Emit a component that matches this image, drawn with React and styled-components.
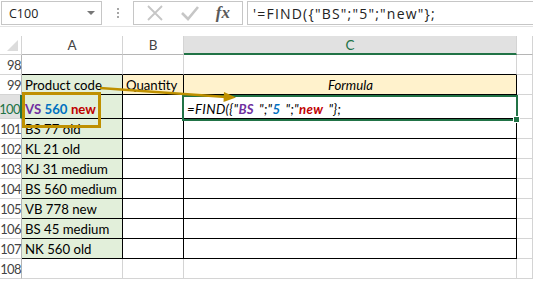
import styled, { createGlobalStyle } from 'styled-components'

const GlobalStyle = createGlobalStyle`
  html, body { margin: 0; padding: 0; background: #fff; }
  body { width: 533px; height: 281px; overflow: hidden; }
`

const GRID = '#d4d4d4'
const GREEN = '#217346'
const GOLD = '#bf9000'

const Page = styled.div`
  width: 533px;
  height: 281px;
  position: relative;
  font-family: Lato, "Liberation Sans", sans-serif;
`

const FormulaBar = styled.div`
  display: flex;
  align-items: center;
  height: 27px;
  padding: 0 0 0 1px;
  border-bottom: 1px solid #e3e3e3;
  box-sizing: border-box;
  font-family: "Open Sans", "Noto Sans", sans-serif;
`

const NameBox = styled.div`
  width: 101px;
  height: 24px;
  box-sizing: border-box;
  border: 1px solid #c6c6c6;
  display: flex;
  align-items: center;
  justify-content: space-between;
  padding: 0 6px 0 7px;
  font-size: 12.5px;
  color: #222;
`

const Caret = styled.span`
  width: 0;
  height: 0;
  border-left: 4px solid transparent;
  border-right: 4px solid transparent;
  border-top: 4px solid #777;
`

const Grip = styled.div`
  width: 31px;
  display: flex;
  flex-direction: column;
  align-items: center;
  gap: 2px;
  span {
    width: 2px;
    height: 2px;
    background: #a6a6a6;
  }
`

const ButtonsBox = styled.div`
  width: 110px;
  height: 24px;
  box-sizing: border-box;
  border: 1px solid #c6c6c6;
  display: flex;
  align-items: center;
  justify-content: space-around;
  padding: 0 4px;
  margin-right: 4px;
`

const Fx = styled.span`
  font-family: "Liberation Serif", serif;
  font-style: italic;
  font-weight: bold;
  font-size: 17px;
  color: #5a5a5a;
`

const FormulaInput = styled.div`
  flex: 1;
  height: 24px;
  box-sizing: border-box;
  border: 1px solid #c6c6c6;
  border-right: none;
  display: flex;
  align-items: center;
  padding-left: 5px;
  font-size: 14px;
  letter-spacing: 1.2px;
  color: #222;
  white-space: nowrap;
`

const Sheet = styled.div`
  margin-top: 9px;
  display: grid;
  grid-template-columns: 22px 101px 61px 333px 1fr;
  grid-template-rows: 19px 20px 20px 24px repeat(8, 20px);
`

const Corner = styled.div`
  border-right: 1px solid ${GRID};
  border-bottom: 1px solid ${GRID};
  position: relative;
  &::after {
    content: '';
    position: absolute;
    right: 3px;
    bottom: 3px;
    border-left: 11px solid transparent;
    border-bottom: 11px solid #dcdcdc;
  }
`

const ColHead = styled.div`
  border-right: 1px solid ${GRID};
  border-bottom: ${p => (p.$active ? `2px solid ${GREEN}` : `1px solid #b5b5b5`)};
  background: ${p => (p.$active ? '#e1e1e1' : '#fff')};
  color: ${p => (p.$active ? GREEN : '#444')};
  font-size: 13.5px;
  display: flex;
  align-items: center;
  justify-content: center;
  box-sizing: border-box;
`

const RowHead = styled.div`
  border-right: ${p => (p.$active ? `2px solid ${GREEN}` : `1px solid #b5b5b5`)};
  border-bottom: 1px solid ${GRID};
  background: ${p => (p.$active ? '#e1e1e1' : '#fff')};
  color: ${p => (p.$active ? GREEN : '#444')};
  font-size: 13px;
  display: flex;
  align-items: flex-end;
  justify-content: flex-end;
  padding: 0 0 1px 0;
  box-sizing: border-box;
  letter-spacing: -0.6px;
  white-space: nowrap;
`

const Cell = styled.div`
  border-right: 1px solid ${p => (p.$right ? '#000' : GRID)};
  border-bottom: 1px solid ${p => (p.$bottom ? '#000' : GRID)};
  background: ${p => p.$bg || '#fff'};
  font-size: 13.2px;
  color: #000;
  display: flex;
  align-items: flex-end;
  justify-content: ${p => (p.$center ? 'center' : 'flex-start')};
  padding: 0 2px 1px 3px;
  box-sizing: border-box;
  white-space: pre;
  font-style: ${p => (p.$italic ? 'italic' : 'normal')};
  overflow: visible;
`

const FormulaSpan = styled.span`
  letter-spacing: 0.35px;
`

const Colored = styled.span`
  color: ${p => p.$color};
  font-weight: bold;
  margin-right: ${p => (p.$gap ? '5px' : '0')};
`

const GoldBox = styled.div`
  position: absolute;
  left: 22px;
  top: 92px;
  width: 79px;
  height: 36px;
  box-sizing: border-box;
  border: 3px solid ${GOLD};
  pointer-events: none;
`

const Selection = styled.div`
  position: absolute;
  left: 182px;
  top: 95px;
  width: 336px;
  height: 26px;
  box-sizing: border-box;
  border: 2px solid ${GREEN};
  pointer-events: none;
  &::after {
    content: '';
    position: absolute;
    right: -4px;
    bottom: -4px;
    width: 5px;
    height: 5px;
    background: ${GREEN};
    border: 1px solid #fff;
  }
`

const Arrow = styled.svg`
  position: absolute;
  left: 0;
  top: 0;
  pointer-events: none;
`

const PURPLE = '#7030a0'
const BLUE = '#0070c0'
const RED = '#c00000'
const GREEN_BG = '#e2efda'
const YELLOW_BG = '#fff2cc'

const products = [
  'BS 77 old',
  'KL 21 old',
  'KJ 31 medium',
  'BS 560 medium',
  'VB 778 new',
  'BS 45 medium',
  'NK 560 old',
]

function FormulaText() {
  return (
    <FormulaSpan>
      {'=FIND({"'}
      <Colored $color={PURPLE} $gap>BS</Colored>
      {'";"'}
      <Colored $color={BLUE} $gap>5</Colored>
      {'";"'}
      <Colored $color={RED} $gap>new</Colored>
      {'"};'}
    </FormulaSpan>
  )
}

function RowWrap({ n, label }) {
  return (
    <>
      <RowHead>{n}</RowHead>
      <Cell $bg={GREEN_BG} $right $bottom><span>{label}</span></Cell>
      <Cell $right $bottom />
      <Cell $right $bottom />
      <Cell />
    </>
  )
}

export default function App() {
  return (
    <Page>
      <GlobalStyle />
      <FormulaBar>
        <NameBox>
          C100
          <Caret />
        </NameBox>
        <Grip><span /><span /><span /></Grip>
        <ButtonsBox>
          <svg width="18" height="18" viewBox="0 0 18 18">
            <path d="M2 2 L16 16 M16 2 L2 16" stroke="#c6c6c6" strokeWidth="1.8" fill="none" />
          </svg>
          <svg width="20" height="18" viewBox="0 0 20 18">
            <path d="M2 9 L8 15 L18 3" stroke="#c6c6c6" strokeWidth="2.6" fill="none" />
          </svg>
          <Fx>fx</Fx>
        </ButtonsBox>
        <FormulaInput>{`'=FIND({"BS";"5";"new"};`}</FormulaInput>
      </FormulaBar>

      <Sheet>
        <Corner />
        <ColHead>A</ColHead>
        <ColHead>B</ColHead>
        <ColHead $active>C</ColHead>
        <ColHead />

        <RowHead>98</RowHead>
        <Cell $bottom />
        <Cell $bottom />
        <Cell $bottom />
        <Cell />

        <RowHead>99</RowHead>
        <Cell $bg={GREEN_BG} $right $bottom><span>Product code</span></Cell>
        <Cell $bg={YELLOW_BG} $right $bottom><span>Quantity</span></Cell>
        <Cell $bg={YELLOW_BG} $right $bottom $center $italic><span>Formula</span></Cell>
        <Cell />

        <RowHead $active>100</RowHead>
        <Cell $bg={GREEN_BG} $right $bottom>
          <span>
            <Colored $color={PURPLE}>VS</Colored>{' '}
            <Colored $color={BLUE}>560</Colored>{' '}
            <Colored $color={RED}>new</Colored>
          </span>
        </Cell>
        <Cell $right $bottom />
        <Cell $right $bottom $italic><FormulaText /></Cell>
        <Cell />

        {products.map((p, i) => (
          <RowWrap key={p} n={101 + i} label={p} />
        ))}

        <RowHead>108</RowHead>
        <Cell />
        <Cell />
        <Cell />
        <Cell />
      </Sheet>

      <Selection />
      <GoldBox />
      <Arrow width="533" height="281">
        <line x1="100" y1="88" x2="226" y2="97" stroke={GOLD} strokeWidth="2.5" />
        <polygon points="236,97.5 224,92 223.5,102" fill={GOLD} />
      </Arrow>
    </Page>
  )
}
